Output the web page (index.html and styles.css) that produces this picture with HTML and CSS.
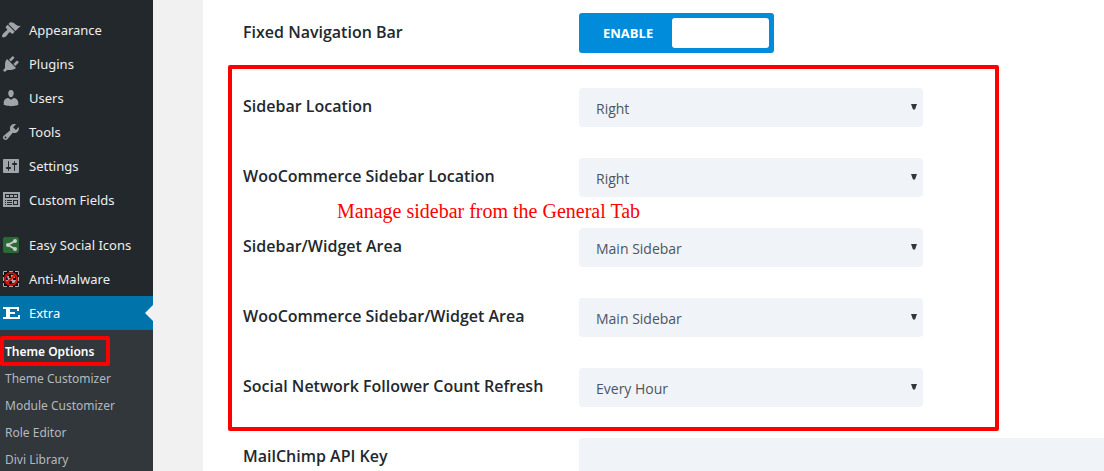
FILE: index.html
```html
<!DOCTYPE html>
<html lang="en">
<head>
<meta charset="utf-8">
<title>Theme Options</title>
<link rel="stylesheet" href="styles.css">
</head>
<body>
<div class="shell">
  <nav class="menu">
    <a class="menu-item" href="#"><svg class="icon" viewBox="0 0 20 20"><path d="M14.48 11.06L7.41 3.99l1.5-1.5c.5-.56 2.3-.47 3.51.32 1.21.8 1.43 1.28 2.91 2.1 1.18.64 2.45 1.26 4.45.85zm-.71.71L6.7 4.7 4.93 6.47c-.39.39-.39 1.02 0 1.41l1.06 1.06c.39.39.39 1.03 0 1.42-.6.6-1.43 1.11-2.21 1.69-.35.26-.7.53-1.01.84C1.43 14.23.4 16.08 1.4 17.07c.99 1 2.84-.03 4.18-1.36.31-.31.58-.66.85-1.02.57-.78 1.08-1.61 1.69-2.21.39-.39 1.02-.39 1.41 0l1.06 1.06c.39.39 1.02.39 1.41 0z"/></svg>Appearance</a>
    <a class="menu-item" href="#"><svg class="icon" viewBox="0 0 20 20"><path d="M13.11 4.36L9.87 7.6 8 5.73l3.24-3.24c.35-.34 1.05-.2 1.56.32.52.51.66 1.21.31 1.55zm-8 1.77l.91-1.12 9.01 9.01-1.19.84c-.71.71-2.63 1.16-3.82 1.16H6.14L4.9 17.26c-.59.59-1.54.59-2.12 0-.59-.58-.59-1.53 0-2.12l1.24-1.24v-3.88c0-1.13.4-3.19 1.09-3.89zm7.26 3.97l3.24-3.24c.34-.35 1.04-.21 1.55.31.52.51.66 1.21.31 1.55l-3.24 3.25z"/></svg>Plugins</a>
    <a class="menu-item" href="#"><svg class="icon" viewBox="0 0 20 20"><path d="M10 9.25c-2.27 0-2.73-3.44-2.73-3.44C7 4.02 7.82 2 9.97 2c2.16 0 2.98 2.02 2.71 3.81 0 0-.41 3.44-2.68 3.44zm0 2.57L12.72 10c2.39 0 4.52 2.33 4.52 4.53v2.49s-3.65 1.13-7.24 1.13c-3.65 0-7.24-1.13-7.24-1.13v-2.49c0-2.25 1.94-4.48 4.47-4.48z"/></svg>Users</a>
    <a class="menu-item" href="#"><svg class="icon" viewBox="0 0 20 20"><path d="M16.68 9.77c-1.34 1.34-3.3 1.67-4.95.99l-5.41 6.52c-.99.99-2.59.99-3.58 0s-.99-2.59 0-3.57l6.52-5.42c-.68-1.65-.35-3.61.99-4.95 1.28-1.28 3.12-1.62 4.72-1.06l-2.89 2.89 2.82 2.82 2.86-2.87c.53 1.58.18 3.39-1.08 4.65zM3.81 16.21c.4.39 1.04.39 1.43 0 .4-.4.4-1.04 0-1.43-.39-.4-1.03-.4-1.43 0-.39.39-.39 1.03 0 1.43z"/></svg>Tools</a>
    <a class="menu-item" href="#"><svg class="icon" viewBox="0 0 20 20"><path d="M18 16V4c0-.55-.45-1-1-1H3c-.55 0-1 .45-1 1v12c0 .55.45 1 1 1h14c.55 0 1-.45 1-1zM8 11h1c.55 0 1 .45 1 1s-.45 1-1 1H8v1.5c0 .28-.22.5-.5.5s-.5-.22-.5-.5V13H6c-.55 0-1-.45-1-1s.45-1 1-1h1V5.5c0-.28.22-.5.5-.5s.5.22.5.5V11zm5-2h-1c-.55 0-1-.45-1-1s.45-1 1-1h1V5.5c0-.28.22-.5.5-.5s.5.22.5.5V7h1c.55 0 1 .45 1 1s-.45 1-1 1h-1v5.5c0 .28-.22.5-.5.5s-.5-.22-.5-.5V9z"/></svg>Settings</a>
    <a class="menu-item" href="#"><svg class="icon" viewBox="0 0 20 20"><path fill-rule="evenodd" d="M2 2h17v15H2zM4 4v4h13V4zM4 10v1h1v-1zM6 10v1h5v-1zM4 12v1h1v-1zM6 12v1h5v-1zM4 14v1h1v-1zM6 14v1h5v-1zM12 10v5h5v-5zM13 11h3v3h-3zM5 5h3v2H5zM9 5h3v2H9zM13 5h3v2h-3z"/></svg>Custom Fields</a>
    <a class="menu-item menu-item-spaced" href="#"><svg class="icon" viewBox="0 0 20 20"><rect class="share-tile" x="2" y="2" width="16" height="16" rx="2"/><path class="share-lines" d="M14 6L7 10l7 4"/><circle class="share-dot" cx="14" cy="6" r="2"/><circle class="share-dot" cx="7" cy="10" r="2"/><circle class="share-dot" cx="14" cy="14" r="2"/></svg>Easy Social Icons</a>
    <a class="menu-item" href="#"><svg class="icon" viewBox="0 0 20 20"><rect class="bug-tile" x="2" y="2" width="16" height="16"/><path class="bug-frame" d="M2.500 6V2.500H6M8 2.500h4M14 2.500h3.500V6M17.500 8v4M17.500 14v3.500H14M12 17.500H8M6 17.500H2.500V14M2.500 12V8"/><path class="bug-body" d="M6 7h2v2h2V6h4v3h-2v2h3v3h-4v-2H8v2H5v-3h2z"/><circle class="bug-ban" cx="10" cy="10" r="6"/><path class="bug-ban" d="M14 6l-8 8"/></svg>Anti-Malware</a>
    <a class="menu-item menu-item-current" href="#"><svg class="icon" viewBox="0 0 20 20"><path d="M2 4h16v4h-2V6H9v3h5v2H9v3h8v-2h2v4H2v-2h3V6H2z"/></svg>Extra</a>
    <div class="submenu">
      <a class="submenu-item submenu-item-current" href="#">Theme Options</a>
      <a class="submenu-item" href="#">Theme Customizer</a>
      <a class="submenu-item" href="#">Module Customizer</a>
      <a class="submenu-item" href="#">Role Editor</a>
      <a class="submenu-item" href="#">Divi Library</a>
    </div>
  </nav>
  <main class="panel">
    <div class="row">
      <span class="label" id="nav-label">Fixed Navigation Bar</span>
      <button class="toggle" type="button" role="switch" aria-checked="true" aria-labelledby="nav-label"><span class="toggle-text">ENABLE</span><span class="toggle-knob"></span></button>
    </div>
    <section class="group">
      <div class="row">
        <label class="label" for="loc">Sidebar Location</label>
        <div class="field"><select class="select" id="loc"><option>Right</option><option>Left</option></select><svg class="arrow" viewBox="0 0 6 6"><path d="M0 0h6L4 5.500H2z"/></svg></div>
      </div>
      <div class="row">
        <label class="label" for="woo-loc">WooCommerce Sidebar Location</label>
        <div class="field"><select class="select" id="woo-loc"><option>Right</option><option>Left</option></select><svg class="arrow" viewBox="0 0 6 6"><path d="M0 0h6L4 5.500H2z"/></svg></div>
      </div>
      <div class="row">
        <label class="label" for="area">Sidebar/Widget Area</label>
        <div class="field"><select class="select" id="area"><option>Main Sidebar</option></select><svg class="arrow" viewBox="0 0 6 6"><path d="M0 0h6L4 5.500H2z"/></svg></div>
      </div>
      <div class="row">
        <label class="label" for="woo-area">WooCommerce Sidebar/Widget Area</label>
        <div class="field"><select class="select" id="woo-area"><option>Main Sidebar</option></select><svg class="arrow" viewBox="0 0 6 6"><path d="M0 0h6L4 5.500H2z"/></svg></div>
      </div>
      <div class="row">
        <label class="label" for="refresh">Social Network Follower Count Refresh</label>
        <div class="field"><select class="select" id="refresh"><option>Every Hour</option></select><svg class="arrow" viewBox="0 0 6 6"><path d="M0 0h6L4 5.500H2z"/></svg></div>
      </div>
      <p class="note">Manage sidebar from the General Tab</p>
    </section>
    <div class="row">
      <label class="label" for="key">MailChimp API Key</label>
      <input class="input" id="key" type="text">
    </div>
  </main>
</div>
</body>
</html>
```
FILE: styles.css
```css
*,
*::before,
*::after {
  box-sizing: border-box;
}

body {
  margin: 0;
  background: #f1f1f1;
  font-family: "Open Sans", "Noto Sans", sans-serif;
}

.shell {
  display: flex;
  height: 100vh;
  overflow: hidden;
}

.menu {
  flex: none;
  width: 153px;
  padding-top: 13px;
  background: #23282d;
}

.menu-item {
  position: relative;
  display: flex;
  align-items: center;
  gap: 8px;
  height: 34px;
  padding-left: 1px;
  color: #eee;
  font-family: "Noto Sans", sans-serif;
  font-size: 13px;
  text-decoration: none;
  white-space: nowrap;
}

.menu-item-spaced {
  margin-top: 11px;
}

.menu-item-current {
  background: #0073aa;
  color: #fff;
}

.menu-item-current::after {
  content: "";
  position: absolute;
  top: 9px;
  right: 0;
  border: 8px solid transparent;
  border-left: 0;
  border-right-color: #f1f1f1;
}

.icon {
  flex: none;
  width: 20px;
  height: 20px;
  fill: #a0a5aa;
}

.menu-item-current .icon {
  fill: #fff;
}

.share-tile {
  fill: #2a6a34;
}

.share-lines {
  fill: none;
  stroke: #ccc;
  stroke-width: 2;
}

.share-dot {
  fill: #ccc;
}

.bug-tile {
  fill: #111;
}

.bug-frame {
  fill: none;
  stroke: #aaa;
}

.bug-body {
  fill: #aaa;
}

.bug-ban {
  fill: none;
  stroke: #c11;
  stroke-width: 2;
}

.submenu {
  height: 100%;
  padding-top: 8px;
  background: #32373c;
}

.submenu-item {
  display: block;
  padding-left: 5px;
  color: #b4b9be;
  font-family: "Noto Sans", sans-serif;
  font-size: 12px;
  line-height: 27px;
  text-decoration: none;
  white-space: nowrap;
}

.submenu-item-current {
  position: relative;
  color: #fff;
  font-weight: 600;
}

.submenu-item-current::before {
  content: "";
  position: absolute;
  top: -2px;
  left: 0;
  width: 110px;
  height: 30px;
  border: 4px solid #f00;
  border-radius: 2px;
}

.panel {
  flex: 1;
  min-width: 0;
  margin-left: 50px;
  padding: 13px 0 0 40px;
  background: #fff;
}

.row {
  display: flex;
  align-items: center;
}

.label {
  flex: none;
  width: 336px;
  padding-bottom: 3px;
  color: #23282d;
  font-size: 16px;
  font-weight: 600;
  line-height: 24px;
}

.toggle {
  display: flex;
  align-items: center;
  justify-content: space-between;
  width: 195px;
  height: 40px;
  padding: 5px 5px 5px 24px;
  border: 0;
  border-radius: 3px;
  background: #008bdb;
  color: #fff;
  font-family: inherit;
  font-size: 13px;
  font-weight: 700;
}

.toggle-knob {
  width: 97px;
  height: 30px;
  border-radius: 3px;
  background: #fff;
}

.group {
  position: relative;
  display: flex;
  flex-direction: column;
  gap: 31px;
  max-width: 771px;
  margin: 12px 0 7px -15px;
  padding: 19px 11px 20px;
  border: 4px solid #f00;
  border-radius: 2px;
}

.field {
  position: relative;
  flex: 0 1 344px;
}

.select {
  display: block;
  width: 100%;
  height: 39px;
  padding: 2px 17px 0;
  border: 0;
  border-radius: 4px;
  background: #f0f3f8;
  color: #4c5560;
  font-family: inherit;
  font-size: 14px;
  appearance: none;
}

.arrow {
  position: absolute;
  top: 16px;
  right: 6px;
  width: 6px;
  height: 6px;
  fill: #32373c;
  pointer-events: none;
}

.note {
  position: absolute;
  top: 130px;
  left: 105px;
  margin: 0;
  color: #f00;
  font-family: "Liberation Serif", serif;
  font-size: 20px;
  line-height: 24px;
  white-space: nowrap;
}

.input {
  flex: 1;
  min-width: 0;
  height: 39px;
  padding: 0 17px;
  border: 0;
  border-radius: 4px 0 0 4px;
  background: #f0f3f8;
  font: inherit;
}
```
